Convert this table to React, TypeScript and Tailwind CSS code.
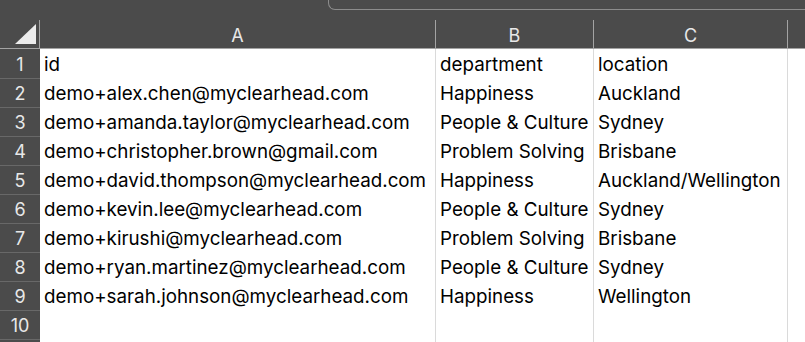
import React from "react"

const data = [
  ["id", "department", "location"],
  ["demo+alex.chen@myclearhead.com", "Happiness", "Auckland"],
  ["demo+amanda.taylor@myclearhead.com", "People & Culture", "Sydney"],
  ["demo+christopher.brown@gmail.com", "Problem Solving", "Brisbane"],
  ["demo+david.thompson@myclearhead.com", "Happiness", "Auckland/Wellington"],
  ["demo+kevin.lee@myclearhead.com", "People & Culture", "Sydney"],
  ["demo+kirushi@myclearhead.com", "Problem Solving", "Brisbane"],
  ["demo+ryan.martinez@myclearhead.com", "People & Culture", "Sydney"],
  ["demo+sarah.johnson@myclearhead.com", "Happiness", "Wellington"],
  ["", "", ""],
  ["", "", ""],
]

const cols = "grid grid-cols-[40px_396px_158px_194px_1fr]"

export default function App() {
  return (
    <div className="w-[805px] h-[342px] overflow-hidden bg-[#4b4b4b] font-['Inter',sans-serif]">
      <div className="h-[20px]">
        <div className="ml-[328px] h-[10px] border-l border-b border-[#8c8c8c] rounded-bl-[7px]" />
      </div>

      <div className={`${cols} h-[29px] border-b border-[#a3a3a3] text-[#e8e8e8] text-[18px]`}>
        <div className="relative border-r border-[#a3a3a3]">
          <svg width="39" height="28" className="absolute left-0 top-0">
            <polygon points="15,24 36,4 36,24" fill="#ececec" />
          </svg>
        </div>
        {["A", "B", "C"].map((c) => (
          <div key={c} className="flex items-end justify-center pb-[3px] border-r border-[#a3a3a3] leading-none">
            {c}
          </div>
        ))}
        <div />
      </div>

      {data.map((row, i) => (
        <div key={i} className={`${cols} h-[29px]`}>
          {/* last row is only a sliver, so no number shown */}
          <div className="flex items-center justify-center border-b border-[#686868] text-[#e8e8e8] text-[18px] pt-[2px]">
            {i < 10 ? i + 1 : ""}
          </div>
          {row.map((cell, j) => (
            <div
              key={j}
              className="bg-white flex items-center pl-[4px] pt-[3px] border-r border-b border-[#dadada] text-black text-[18.8px] whitespace-nowrap overflow-hidden"
            >
              {cell}
            </div>
          ))}
          <div className="bg-white border-b border-[#dadada]" />
        </div>
      ))}
    </div>
  )
}
